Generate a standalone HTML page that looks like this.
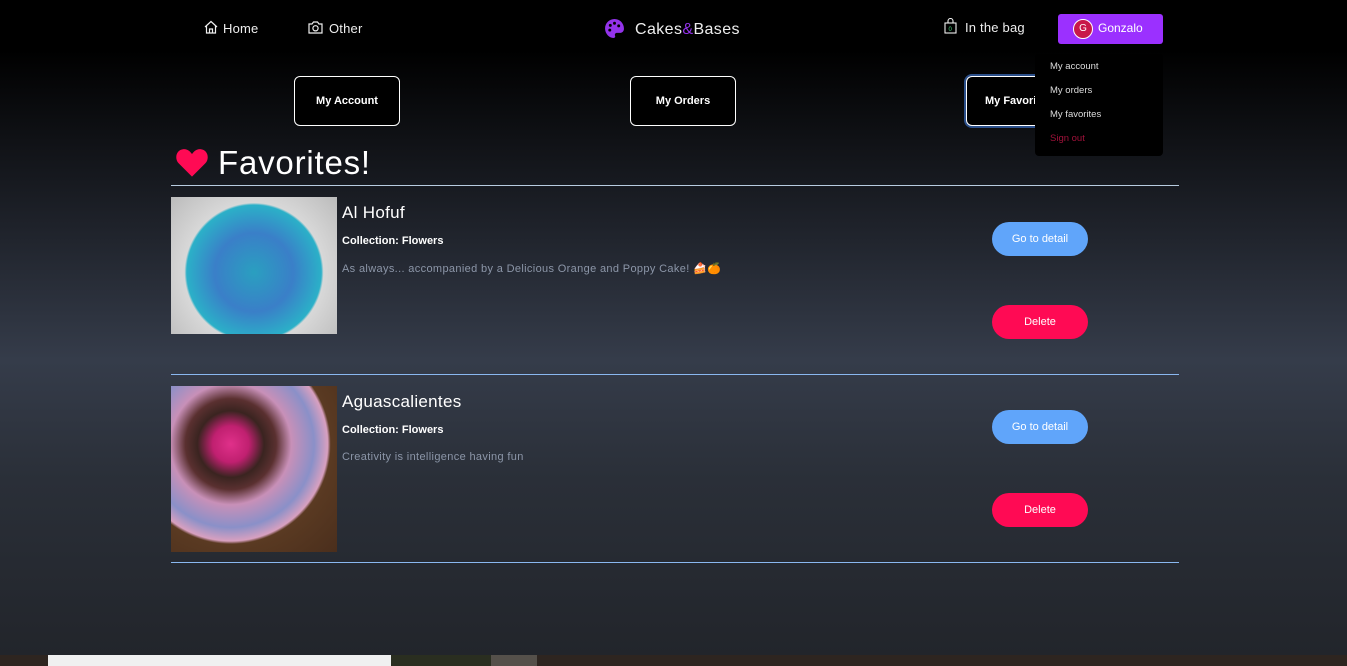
<!DOCTYPE html>
<html><head><style>
*{margin:0;padding:0;box-sizing:border-box}
body{width:1347px;height:666px;overflow:hidden;font-family:"Liberation Sans",sans-serif;color:#fff;
background:linear-gradient(180deg,#000 0px,#000 50px,#1a1d24 200px,#353c4a 360px,#2a2f38 480px,#22252b 655px);position:relative}
.a{position:absolute}
.nav{font-size:13px;color:#eee;letter-spacing:0.2px}
.tab{position:absolute;top:76px;width:106px;height:50px;border:1px solid #fff;border-radius:6px;background:#000;font-size:11px;font-weight:bold;display:flex;align-items:center;justify-content:center}
.hr{position:absolute;left:171px;width:1008px;height:1px;background:#8ab8f0}
.btn{position:absolute;left:992px;width:96px;height:34px;border-radius:17px;font-size:11px;display:flex;align-items:center;justify-content:center}
.blue{background:#60a5fa}.red{background:#ff0a54}
.title{font-size:17px;letter-spacing:0.3px}
.col{font-size:11px;font-weight:bold}
.desc{font-size:11px;color:#8c96a8;letter-spacing:0.35px}
</style></head><body>
<svg class="a" style="left:204px;top:20px" width="14" height="14" viewBox="0 0 14 14" fill="none" stroke="#eee" stroke-width="1.2"><path d="M1 7L7 1.5L13 7M2.5 5.8V13H11.5V5.8M5.5 13V9H8.5V13"/></svg>
<div class="a nav" style="left:223px;top:21px">Home</div>
<svg class="a" style="left:308px;top:21px" width="15" height="13" viewBox="0 0 15 13" fill="none" stroke="#eee" stroke-width="1.2"><path d="M1 3H4L5.5 1H9.5L11 3H14V12H1Z"/><circle cx="7.5" cy="7.3" r="2.6"/></svg>
<div class="a nav" style="left:329px;top:21px">Other</div>
<svg class="a" style="left:604px;top:18px" width="21" height="21" viewBox="0 0 20 20"><path fill="#9333ea" d="M10 1C5 1 1 5 1 10s4 9 8 9c1.5 0 2-1 1.5-2.2-.5-1.3.3-2.6 1.8-2.6H15c2.5 0 4-1.7 4-4C19 5 15 1 10 1z"/><circle cx="6" cy="7" r="1.4" fill="#000"/><circle cx="10" cy="5" r="1.4" fill="#000"/><circle cx="14" cy="7.5" r="1.4" fill="#000"/><circle cx="5.5" cy="11.5" r="1.4" fill="#000"/></svg>
<div class="a" style="left:635px;top:21px;font-size:16px;color:#eee;letter-spacing:0.4px">Cakes<span style="color:#9333ea">&amp;</span>Bases</div>
<svg class="a" style="left:944px;top:18px" width="13" height="16" viewBox="0 0 13 16" fill="none" stroke="#eee" stroke-width="1.1"><rect x="1" y="5" width="11" height="10"/><path d="M4 5V3a2.5 2.5 0 015 0v2"/><text x="4.5" y="13" font-size="6" fill="#4ade80" stroke="none">0</text></svg>
<div class="a nav" style="left:965px;top:20px">In the bag</div>
<div class="a" style="left:1058px;top:14px;width:105px;height:30px;background:#9b30ff;border-radius:3px"></div>
<div class="a" style="left:1073px;top:19px;width:20px;height:20px;border-radius:50%;background:#c8184a;border:1px solid #fff;font-size:10px;text-align:center;line-height:18px">G</div>
<div class="a" style="left:1098px;top:21px;font-size:12px">Gonzalo</div>
<div class="tab" style="left:294px">My Account</div>
<div class="tab" style="left:630px">My Orders</div>
<div class="tab" style="left:966px;border-color:#fff;box-shadow:0 0 0 2px #2b4f8a;justify-content:flex-start;padding-left:18px;overflow:hidden">My Favorites</div>
<div class="a" style="left:1035px;top:54px;width:128px;height:102px;background:#000;border-radius:4px;font-size:9.5px;line-height:24px;padding:1px 15px;color:#ddd">
<div>My account</div><div>My orders</div><div>My favorites</div><div style="color:#a0113a">Sign out</div></div>
<svg class="a" style="left:175px;top:147px" width="34" height="31" viewBox="0 0 24 22"><path fill="#ff0a54" d="M12 21L2.5 11.5C-.5 8.5.5 2 6 1.5c3-.2 4.8 1.8 6 3.5 1.2-1.7 3-3.7 6-3.5 5.5.5 6.5 7 3.5 10z"/></svg>
<div class="a" style="left:218px;top:144px;font-size:33px;letter-spacing:0.8px">Favorites!</div>
<div class="hr" style="top:185px;background:#b8cce0"></div>
<div class="a" style="left:171px;top:197px;width:166px;height:137px;background:radial-gradient(circle at 50% 55%,#2a9fc0 0,#3a7fc8 35%,#2bb0c8 60%,#d8d8d8 62%,#bbb 100%)"></div>
<div class="a title" style="left:342px;top:203px">Al Hofuf</div>
<div class="a col" style="left:342px;top:235px">Collection: Flowers</div>
<div class="a desc" style="left:342px;top:262px">As always... accompanied by a Delicious Orange and Poppy Cake! 🍰🍊</div>
<div class="btn blue" style="top:222px">Go to detail</div>
<div class="btn red" style="top:305px">Delete</div>
<div class="hr" style="top:374px"></div>
<div class="a" style="left:171px;top:386px;width:166px;height:166px;background:radial-gradient(circle at 36% 35%,#e0308a 0,#c02070 12%,#3a2420 22%,#5a3030 30%,#c890b8 40%,#8a90c8 55%,#d8a0c0 64%,#5a3a22 66%,#4a2e1c 100%)"></div>
<div class="a title" style="left:342px;top:392px">Aguascalientes</div>
<div class="a col" style="left:342px;top:424px">Collection: Flowers</div>
<div class="a desc" style="left:342px;top:451px">Creativity is intelligence having fun</div>
<div class="btn blue" style="top:410px">Go to detail</div>
<div class="btn red" style="top:493px">Delete</div>
<div class="hr" style="top:562px"></div>
<div class="a" style="left:0;top:655px;width:1347px;height:11px;background:#2e2520"></div>
<div class="a" style="left:48px;top:655px;width:343px;height:11px;background:#f0f0f0"></div>
<div class="a" style="left:391px;top:655px;width:100px;height:11px;background:#2a2e20"></div>
<div class="a" style="left:491px;top:655px;width:46px;height:11px;background:#55504a"></div>
</body></html>
